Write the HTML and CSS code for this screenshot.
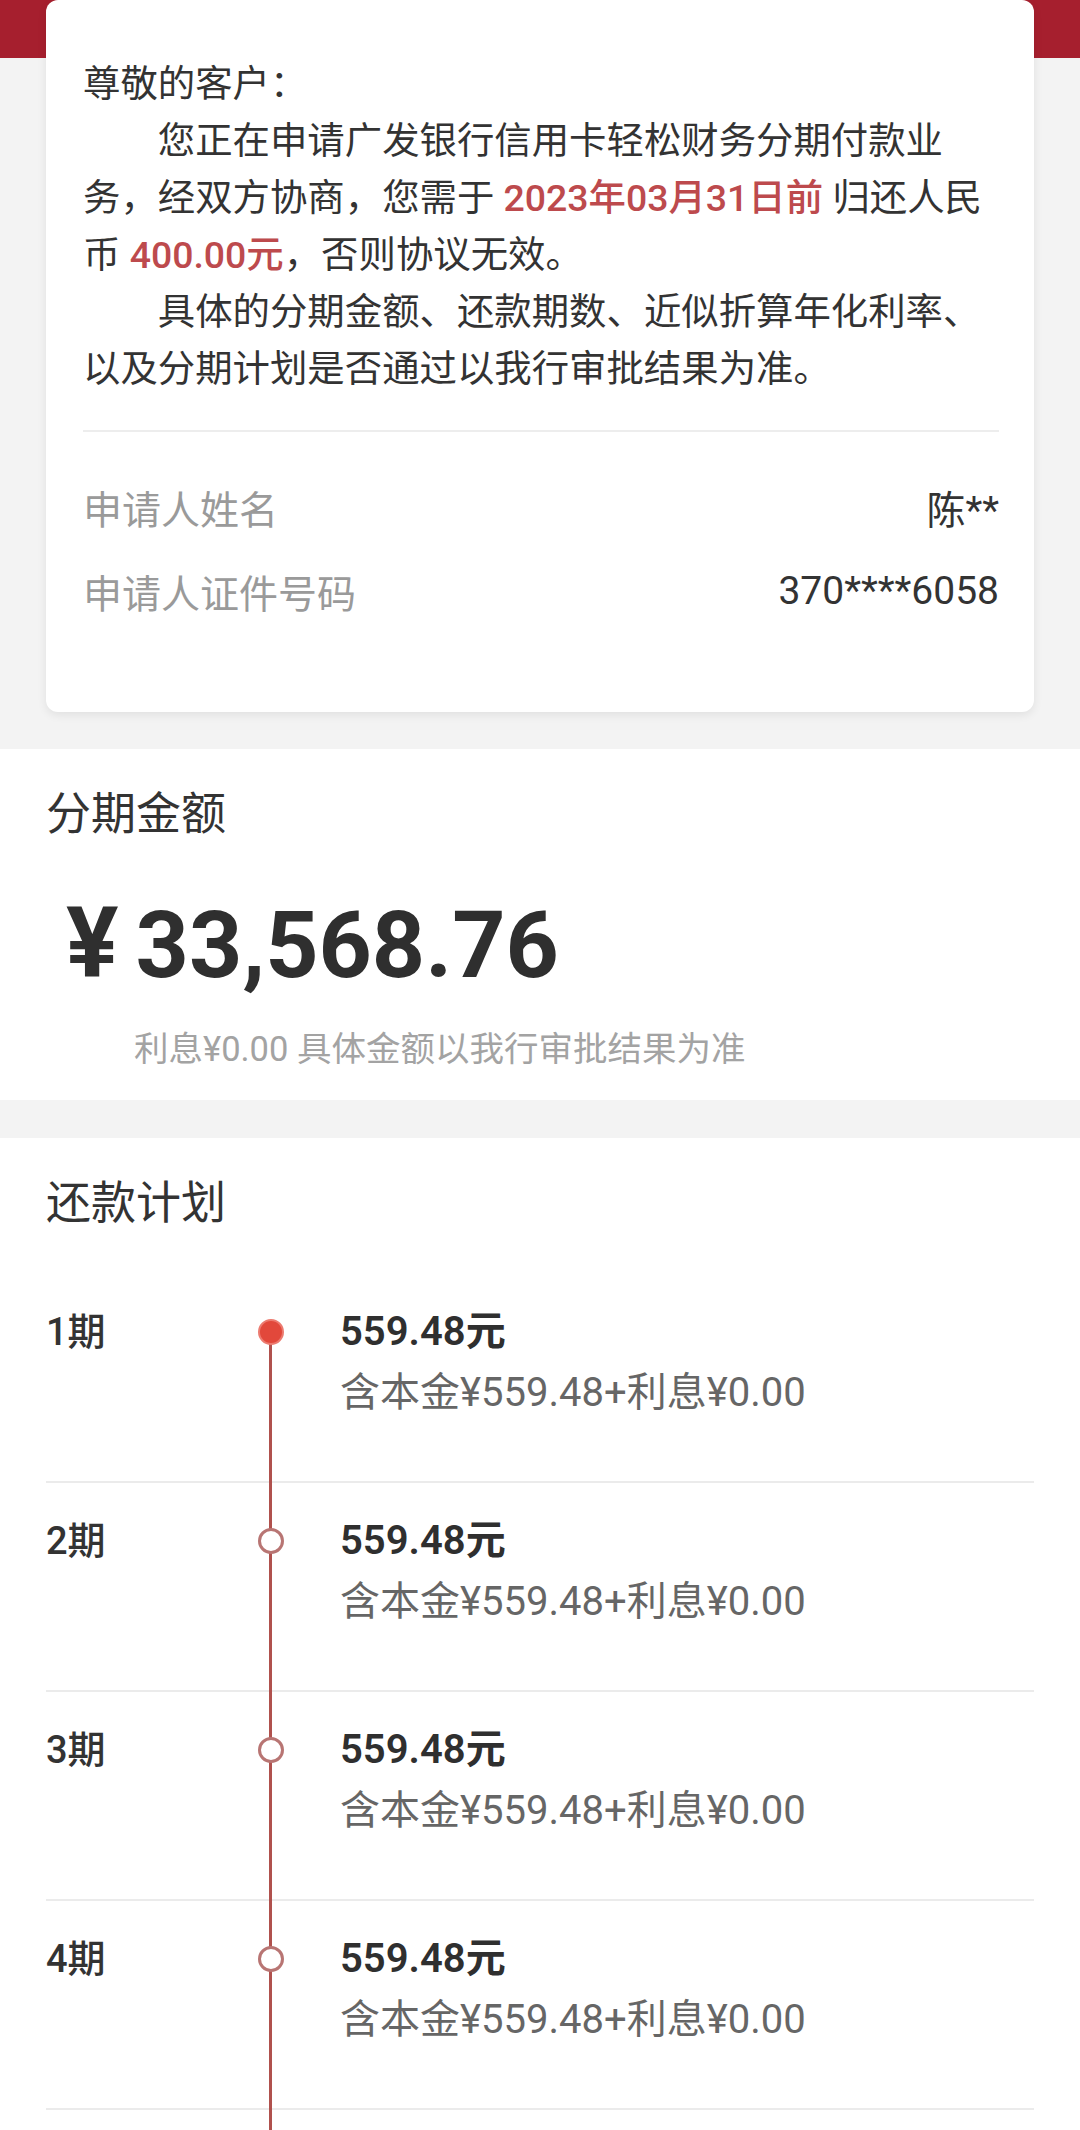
FILE: index.html
```html
<!DOCTYPE html>
<html lang="zh-CN">
<head>
<meta charset="utf-8">
<title>分期付款</title>
<link rel="stylesheet" href="styles.css">
</head>
<body>
<div class="top">
  <div class="card">
    <p class="greet">尊敬的客户：</p>
    <p class="para">您正在申请广发银行信用卡轻松财务分期付款业务，经双方协商，您需于 <span class="hl">2023年03月31日前</span> 归还人民币 <span class="hl">400.00元</span>，否则协议无效。</p>
    <p class="para">具体的分期金额、还款期数、近似折算年化利率、以及分期计划是否通过以我行审批结果为准。</p>
    <div class="divider"></div>
    <div class="info-row"><span class="info-label">申请人姓名</span><span class="info-value">陈**</span></div>
    <div class="info-row"><span class="info-label">申请人证件号码</span><span class="info-value">370****6058</span></div>
  </div>
</div>

<section class="section amount-section">
  <h2 class="sec-title">分期金额</h2>
  <div class="amount"><span class="cur">¥</span>33,568.76</div>
  <div class="amount-note">利息¥0.00 具体金额以我行审批结果为准</div>
</section>

<section class="section plan-section">
  <h2 class="sec-title plan-title">还款计划</h2>
  <div class="plan">
    <div class="plan-row first">
      <div class="term">1期</div>
      <div class="track"><span class="dot filled"></span></div>
      <div class="detail"><div class="pay">559.48元</div><div class="breakdown">含本金¥559.48+利息¥0.00</div></div>
    </div>
    <div class="plan-row">
      <div class="term">2期</div>
      <div class="track"><span class="dot"></span></div>
      <div class="detail"><div class="pay">559.48元</div><div class="breakdown">含本金¥559.48+利息¥0.00</div></div>
    </div>
    <div class="plan-row">
      <div class="term">3期</div>
      <div class="track"><span class="dot"></span></div>
      <div class="detail"><div class="pay">559.48元</div><div class="breakdown">含本金¥559.48+利息¥0.00</div></div>
    </div>
    <div class="plan-row">
      <div class="term">4期</div>
      <div class="track"><span class="dot"></span></div>
      <div class="detail"><div class="pay">559.48元</div><div class="breakdown">含本金¥559.48+利息¥0.00</div></div>
    </div>
    <div class="plan-row">
      <div class="term">5期</div>
      <div class="track"><span class="dot"></span></div>
      <div class="detail"><div class="pay">559.48元</div><div class="breakdown">含本金¥559.48+利息¥0.00</div></div>
    </div>
    <div class="plan-row">
      <div class="term">6期</div>
      <div class="track"><span class="dot"></span></div>
      <div class="detail"><div class="pay">559.48元</div><div class="breakdown">含本金¥559.48+利息¥0.00</div></div>
    </div>
  </div>
</section>
</body>
</html>
```

FILE: styles.css
```css
html, body {
  margin: 0;
  padding: 0;
  background: #f3f3f3;
}
body {
  font-family: Roboto, "Noto Sans CJK SC", sans-serif;
  color: #333;
  width: 1080px;
}
p, h2 { margin: 0; }

.top {
  background: linear-gradient(#a61f2e 0, #a61f2e 58px, #f3f3f3 58px);
  padding: 0 46px 37px;
}
.card {
  background: #fff;
  border-radius: 12px;
  box-shadow: 0 3px 10px rgba(0, 0, 0, 0.08);
  padding: 56px 35px 79px 37px;
}
.greet, .para {
  font-size: 37.4px;
  line-height: 57px;
  color: #333;
}
.para { text-indent: 2em; }
.hl {
  color: #bd4a4d;
  font-weight: 500;
}
.divider {
  height: 2px;
  background: #ededed;
  margin: 32px 0 33px;
}
.info-row {
  height: 84px;
  display: flex;
  align-items: center;
  justify-content: space-between;
  font-size: 39px;
}
.info-label { color: #9a9a9a; }
.info-value { color: #333; }

.section {
  background: #fff;
  padding: 40px 46px 0;
}
.amount-section { padding-bottom: 27px; }
.plan-section { margin-top: 38px; }
.sec-title {
  font-size: 45px;
  line-height: 52px;
  font-weight: 400;
  color: #333;
}
.amount {
  margin: 43px 0 0 20px;
  font-size: 93px;
  line-height: 120px;
  font-weight: 700;
  color: #2f2f2f;
}
.cur {
  font-size: 98px;
  margin-right: 17px;
}
.amount-note {
  margin: 19px 0 0 88px;
  font-size: 34.5px;
  line-height: 48px;
  color: #a3a3a3;
}

.plan-title { margin-bottom: 44px; }
.plan-row {
  display: grid;
  grid-template-columns: 212px 26px 1fr;
  border-bottom: 2px solid #ebebeb;
}
.term {
  padding-top: 36px;
  font-size: 38px;
  line-height: 44px;
  font-weight: 500;
  color: #333;
}
.track {
  position: relative;
  display: flex;
  justify-content: center;
}
.track::before {
  content: "";
  position: absolute;
  left: 11px;
  width: 3px;
  top: 0;
  bottom: -2px;
  background: #b0514d;
}
.first .track::before { top: 58px; }
.dot {
  position: relative;
  box-sizing: border-box;
  width: 26px;
  height: 26px;
  margin-top: 45px;
  border-radius: 50%;
  background: #fff;
  border: 3px solid #b87573;
}
.dot.filled {
  background: #e2483b;
  border: 2px solid #ec7b70;
}
.detail {
  padding: 36px 0 66px 56px;
}
.pay {
  font-size: 40px;
  line-height: 44px;
  font-weight: 600;
  color: #2f2f2f;
}
.breakdown {
  margin-top: 17px;
  font-size: 40px;
  line-height: 44px;
  color: #666;
}
```
